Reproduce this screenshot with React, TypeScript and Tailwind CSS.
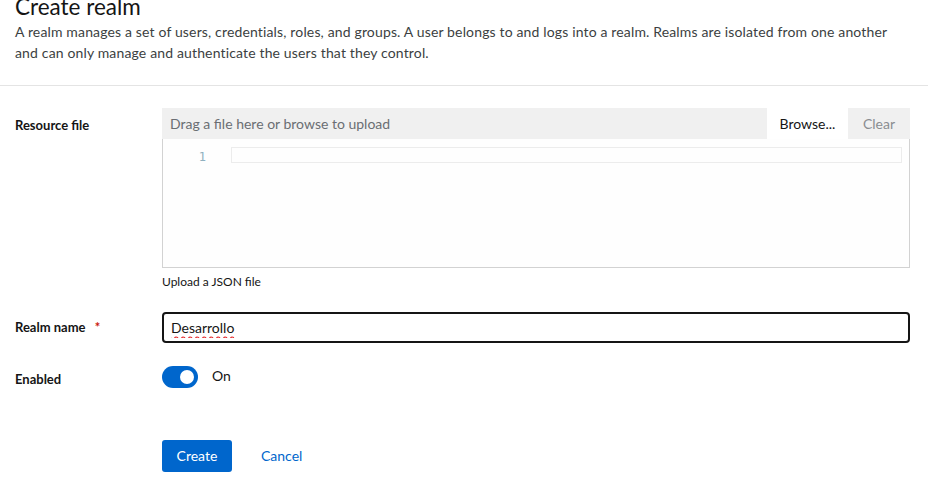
import { useState } from 'react';

const labelStyle = 'text-[13px] font-bold text-[#151515]';

const App = () => {
  const [enabled, setEnabled] = useState(true);
  const [realmName, setRealmName] = useState('Desarrollo');

  return (
    <div className="min-h-screen bg-white font-['Lato',sans-serif] text-[#151515] overflow-hidden">
      {/* page header, scrolled a bit so title is clipped */}
      <div className="px-[15px] pb-[22px] border-b border-[#e4e4e4] -mt-[8px]">
        <h1 className="text-[22.5px] leading-[30px] font-normal text-[#151515]">
          Create realm
        </h1>
        <p className="text-[14px] leading-[21px] tracking-[0.15px] text-[#3c3f42] max-w-[880px] -mt-[1px]">
          A realm manages a set of users, credentials, roles, and groups. A user
          belongs to and logs into a realm. Realms are isolated from one another
          and can only manage and authenticate the users that they control.
        </p>
      </div>

      <div className="px-[15px] pt-[22px] pr-[18px]">
        {/* Resource file */}
        <div className="grid grid-cols-[147px_1fr]">
          <div className={`${labelStyle} pt-[8px]`}>Resource file</div>
          <div>
            <div className="flex h-[31px] bg-[#f0f0f0]">
              <div className="flex-1 flex items-center px-[8px] text-[14px] text-[#6a6e73]">
                Drag a file here or browse to upload
              </div>
              <button className="w-[81px] bg-white text-[14px] text-[#151515]">
                Browse...
              </button>
              <button className="w-[62px] text-[14px] text-[#8a8d90]">
                Clear
              </button>
            </div>
            <div className="h-[129px] border border-t-0 border-[#d2d2d2] bg-[#fefefe] pt-[8px] flex">
              <div className="w-[68px] text-right pr-[25px] pt-[2px] text-[12px] leading-[16px] text-[#8fb0bf] font-['DejaVu_Sans_Mono',monospace]">
                1
              </div>
              <div className="flex-1 h-[16px] border border-[#ececec] mr-[7px]"></div>
            </div>
            <div className="text-[12px] mt-[6px] leading-[16px] text-[#151515]">
              Upload a JSON file
            </div>
          </div>
        </div>

        {/* Realm name */}
        <div className="grid grid-cols-[147px_1fr] mt-[22px] items-center">
          <div className={labelStyle}>
            Realm name <span className="text-[#c9190b] ml-[6px]">*</span>
          </div>
          <div className="h-[31px] border-2 border-[#151515] rounded-[4px] flex items-center px-[7px]">
            <input
              value={realmName}
              onChange={(e) => setRealmName(e.target.value)}
              className="w-full outline-none text-[14px] text-[#151515] bg-transparent underline decoration-wavy decoration-[#e5292b] underline-offset-[3px]"
            />
          </div>
        </div>

        {/* Enabled */}
        <div className="grid grid-cols-[147px_1fr] mt-[21px] items-center">
          <div className={`${labelStyle} pt-[6px]`}>Enabled</div>
          <div className="flex items-center gap-[14px]">
            <button
              onClick={() => setEnabled(!enabled)}
              className={`w-[36px] h-[22px] rounded-full flex items-center px-[4px] ${
                enabled ? 'bg-[#0066cc] justify-end' : 'bg-[#8a8d90] justify-start'
              }`}
            >
              <span className="w-[14px] h-[14px] rounded-full bg-white"></span>
            </button>
            <span className="text-[14px] text-[#151515] -mt-[2px]">
              {enabled ? 'On' : 'Off'}
            </span>
          </div>
        </div>

        {/* actions */}
        <div className="grid grid-cols-[147px_1fr] mt-[50px]">
          <div></div>
          <div className="flex items-center gap-[29px]">
            <button className="h-[32px] w-[70px] rounded-[3px] bg-[#0066cc] text-white text-[14px]">
              Create
            </button>
            <button className="text-[14px] text-[#0066cc]">Cancel</button>
          </div>
        </div>
      </div>
    </div>
  );
};

export default App;
